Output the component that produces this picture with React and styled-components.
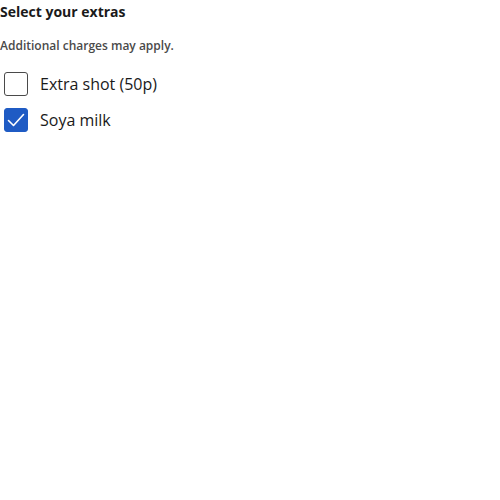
import React, { useState } from "react";
import styled, { createGlobalStyle } from "styled-components";

const Global = createGlobalStyle`
  body { margin: 0; font-family: "Open Sans", "Noto Sans", sans-serif; color: #1a1a1a; background: #fff; }
`;

const Fieldset = styled.fieldset`
  margin: 0;
  padding: 0;
  border: 0;
`;

const Legend = styled.legend`
  padding: 0;
  margin: 0;
  font-size: 14px;
  line-height: 24px;
  font-weight: 700;
  color: #1a1a1a;
`;

const Hint = styled.p`
  margin: 12px 0 0;
  font-size: 12px;
  line-height: 20px;
  font-weight: 600;
  color: #4a4a4a;
`;

const List = styled.div`
  display: flex;
  flex-direction: column;
  gap: 12px;
  margin-top: 16px;
  padding-left: 4px;
`;

const Row = styled.label`
  display: flex;
  align-items: center;
  gap: 12px;
  cursor: pointer;
`;

const Box = styled.span`
  width: 24px;
  height: 24px;
  box-sizing: border-box;
  border-radius: 3px;
  border: 1.5px solid ${(p) => (p.$checked ? "#1f5bc4" : "#4a4a4a")};
  background: ${(p) => (p.$checked ? "#1f5bc4" : "#fff")};
  display: flex;
  align-items: center;
  justify-content: center;
`;

const Hidden = styled.input`
  position: absolute;
  opacity: 0;
  width: 0;
  height: 0;
`;

const Label = styled.span`
  font-size: 16px;
  line-height: 24px;
  color: #1a1a1a;
`;

function Check({ label, checked, onChange }) {
  return (
    <Row>
      <Hidden type="checkbox" checked={checked} onChange={onChange} />
      <Box $checked={checked}>
        {checked && (
          <svg width="22" height="22" viewBox="0 0 22 22" fill="none">
            <path d="M3.5 11.5 L8.5 16.5 L18.5 5.5" stroke="#fff" strokeWidth="1.6" strokeLinecap="round" strokeLinejoin="round" />
          </svg>
        )}
      </Box>
      <Label>{label}</Label>
    </Row>
  );
}

export default function App() {
  const [a, setA] = useState(false);
  const [b, setB] = useState(true);
  return (
    <>
      <Global />
      <Fieldset>
        <Legend>Select your extras</Legend>
        <Hint>Additional charges may apply.</Hint>
        <List>
          <Check label="Extra shot (50p)" checked={a} onChange={() => setA(!a)} />
          <Check label="Soya milk" checked={b} onChange={() => setB(!b)} />
        </List>
      </Fieldset>
    </>
  );
}
